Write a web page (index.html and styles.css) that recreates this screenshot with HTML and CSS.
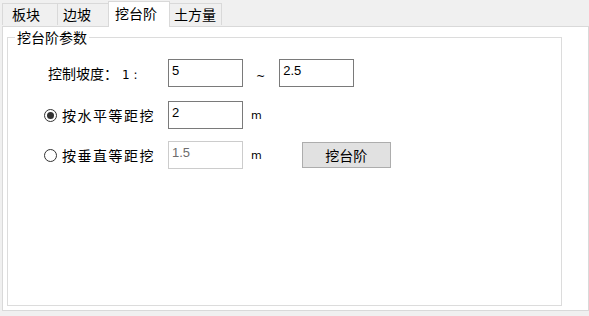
FILE: index.html
```html
<!DOCTYPE html>
<html lang="zh-CN">
<head>
    <meta charset="UTF-8">
    <title>挖台阶</title>
    <link rel="stylesheet" href="styles.css">
</head>
<body>
    <nav class="tabs">
        <div class="tab t1">板块</div>
        <div class="tab t2">边坡</div>
        <div class="tab t3 active">挖台阶</div>
        <div class="tab t4">土方量</div>
    </nav>
    <section class="panel">
        <fieldset class="group">
            <legend>挖台阶参数</legend>
            <div class="row">
                <span class="cell label">控制坡度：<span class="num">1 :</span></span>
                <input class="box" type="text" value="5">
                <span class="tilde">~</span>
                <input class="box" type="text" value="2.5">
            </div>
            <div class="row">
                <label class="cell radio"><span class="dot checked"></span>按水平等距挖</label>
                <input class="box" type="text" value="2">
                <span class="unit">m</span>
            </div>
            <div class="row">
                <label class="cell radio"><span class="dot"></span>按垂直等距挖</label>
                <input class="box" type="text" value="1.5" disabled>
                <span class="unit">m</span>
                <button class="btn">挖台阶</button>
            </div>
        </fieldset>
    </section>
</body>
</html>
```

FILE: styles.css
```css
html, body {
    margin: 0;
    padding: 0;
}

body {
    width: 589px;
    height: 316px;
    background-color: #f0f0f0;
    font-family: "Noto Sans CJK SC", "Liberation Sans", sans-serif;
    font-size: 14px;
    color: #000;
}

.tabs {
    display: flex;
    align-items: flex-end;
    height: 26px;
    padding-left: 2px;
}

.tab {
    box-sizing: border-box;
    height: 22px;
    line-height: 21px;
    border: 1px solid #d9d9d9;
    border-bottom: none;
    border-right: none;
    background-color: #f0f0f0;
    margin-bottom: 1px;
}

.t1 {
    width: 55px;
    padding-left: 9px;
}

.t2 {
    width: 51px;
    padding-left: 5px;
}

.t3 {
    width: 62px;
    padding-left: 6px;
}

.t4 {
    width: 52px;
    padding-left: 4px;
    border-right: 1px solid #d9d9d9;
}

.tab.active {
    height: 26px;
    line-height: 22px;
    background-color: #fff;
    border-right: 1px solid #d9d9d9;
    margin-bottom: -1px;
    position: relative;
    z-index: 1;
}

.tab.active + .tab {
    border-left: none;
}

.panel {
    margin-left: 2px;
    height: 283px;
    border: 1px solid #d9d9d9;
    background-color: #fff;
}

.group {
    margin: 0 26px 0 4px;
    padding: 0;
    height: 277px;
    border: 1px solid #dcdcdc;
    box-shadow: inset 1px 1px 0 #fff;
}

.group legend {
    margin-left: 7px;
    padding: 0 2px;
    line-height: 20px;
}

.row {
    display: flex;
    align-items: center;
    height: 28px;
}

.row:nth-of-type(1) {
    margin-top: 12px;
}

.row:nth-of-type(2) {
    margin-top: 14px;
}

.row:nth-of-type(3) {
    margin-top: 12px;
}

.cell {
    width: 160px;
    box-sizing: border-box;
}

.label {
    padding-left: 40px;
}

.num {
    font-family: "DejaVu Sans", sans-serif;
    font-size: 12px;
    margin-left: 4px;
}

.radio {
    display: flex;
    align-items: center;
    padding-left: 36px;
    letter-spacing: 1.5px;
}

.dot {
    display: inline-block;
    width: 11px;
    height: 11px;
    border: 1px solid #333;
    border-radius: 50%;
    margin-right: 5px;
    position: relative;
}

.dot.checked::after {
    content: "";
    position: absolute;
    left: 2px;
    top: 2px;
    width: 7px;
    height: 7px;
    border-radius: 50%;
    background-color: #333;
}

.box {
    width: 75px;
    height: 28px;
    box-sizing: border-box;
    border: 1px solid #7a7a7a;
    padding: 0 2px 6px 3px;
    margin: 0;
    font-family: "Liberation Sans", sans-serif;
    font-size: 13px;
    color: #000;
    background-color: #fff;
    outline: none;
}

.box:disabled {
    border-color: #cccccc;
    color: #6d6d6d;
}

.tilde {
    font-family: "DejaVu Sans", sans-serif;
    font-size: 11px;
    margin: 6px 14px 0 13px;
}

.unit {
    font-family: "DejaVu Sans", sans-serif;
    font-size: 11px;
    margin-left: 8px;
}

.btn {
    margin-left: 40px;
    width: 89px;
    height: 26px;
    border: 1px solid #adadad;
    background-color: #e1e1e1;
    font-family: "Noto Sans CJK SC", sans-serif;
    font-size: 14px;
    color: #000;
    padding: 0;
}
```
